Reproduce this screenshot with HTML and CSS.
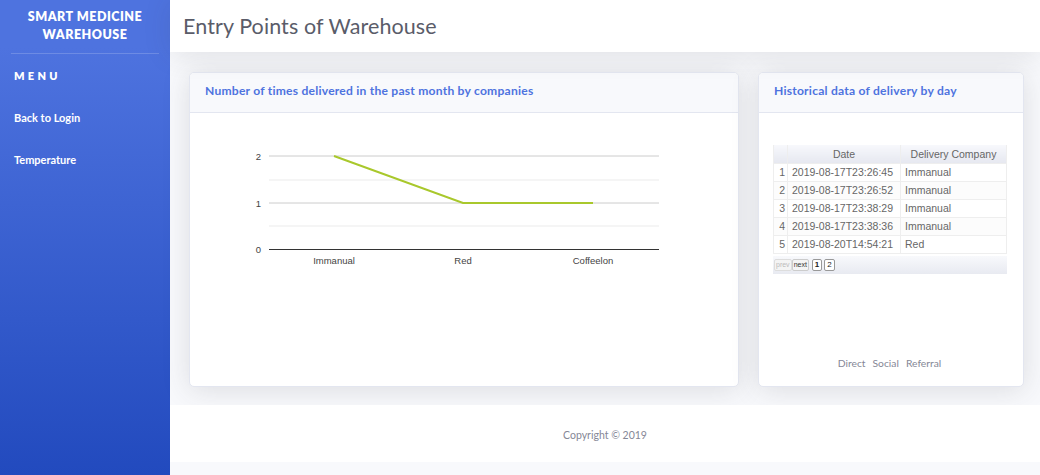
FILE: index.html
```html
<!DOCTYPE html>
<html>
<head>
<meta charset="utf-8">
<link rel="stylesheet" href="styles.css">
</head>
<body>
<div class="wrapper">
  <aside class="sidebar">
    <div class="brand">SMART MEDICINE<br>WAREHOUSE</div>
    <hr class="divider">
    <div class="menu-heading">MENU</div>
    <a class="nav-link" href="#">Back to Login</a>
    <a class="nav-link" href="#">Temperature</a>
  </aside>
  <div class="main">
    <header class="topbar">
      <h1 class="page-title">Entry Points of Warehouse</h1>
    </header>
    <div class="content">
      <div class="card card-chart">
        <div class="card-header">Number of times delivered in the past month by companies</div>
        <div class="card-body chart-body">
          <svg class="line-chart" width="549" height="274" viewBox="0 0 549 274">
            <line x1="80" y1="68" x2="470" y2="68" stroke="#ebebeb" stroke-width="1"/>
            <line x1="80" y1="114" x2="470" y2="114" stroke="#ebebeb" stroke-width="1"/>
            <line x1="80" y1="44" x2="470" y2="44" stroke="#cccccc" stroke-width="1"/>
            <line x1="80" y1="91" x2="470" y2="91" stroke="#cccccc" stroke-width="1"/>
            <line x1="80" y1="137.5" x2="470" y2="137.5" stroke="#333333" stroke-width="1"/>
            <g class="axis-text" font-family="Liberation Sans, Arial, sans-serif" font-size="9.5" fill="#444">
              <text x="72" y="47.5" text-anchor="end">2</text>
              <text x="72" y="94.5" text-anchor="end">1</text>
              <text x="72" y="141" text-anchor="end">0</text>
              <text x="145" y="152" text-anchor="middle">Immanual</text>
              <text x="274" y="152" text-anchor="middle">Red</text>
              <text x="404" y="152" text-anchor="middle">Coffeelon</text>
            </g>
            <polyline points="145,44 274,91 404,91" fill="none" stroke="#a9c82c" stroke-width="2"/>
          </svg>
        </div>
      </div>
      <div class="card card-table">
        <div class="card-header">Historical data of delivery by day</div>
        <div class="card-body table-body">
          <div class="gtable">
            <table>
              <thead>
                <tr><th class="num"></th><th class="date">Date</th><th class="company">Delivery Company</th></tr>
              </thead>
              <tbody>
                <tr><td class="num">1</td><td>2019-08-17T23:26:45</td><td>Immanual</td></tr>
                <tr class="even"><td class="num">2</td><td>2019-08-17T23:26:52</td><td>Immanual</td></tr>
                <tr><td class="num">3</td><td>2019-08-17T23:38:29</td><td>Immanual</td></tr>
                <tr class="even"><td class="num">4</td><td>2019-08-17T23:38:36</td><td>Immanual</td></tr>
                <tr><td class="num">5</td><td>2019-08-20T14:54:21</td><td>Red</td></tr>
              </tbody>
            </table>
            <div class="pager">
              <span class="pbtn disabled">prev</span><span class="pbtn">next</span>
              <span class="page active">1</span><span class="page">2</span>
            </div>
          </div>
          <div class="legend">
            <span>Direct</span><span>Social</span><span>Referral</span>
          </div>
        </div>
      </div>
    </div>
    <footer class="footer">Copyright © 2019</footer>
  </div>
</div>
</body>
</html>
```

FILE: styles.css
```css
* { box-sizing: border-box; }
html, body { margin: 0; padding: 0; }
body {
  font-family: "Lato", "Open Sans", sans-serif;
  background: #f8f9fc;
  width: 1040px;
  height: 475px;
  overflow: hidden;
}
.wrapper { display: flex; height: 475px; }
.sidebar {
  width: 170px;
  flex: none;
  background: linear-gradient(180deg, #4e73df 10%, #224abe 100%);
  color: #fff;
  display: flex;
  flex-direction: column;
}
.brand {
  text-align: center;
  font-weight: 800;
  font-size: 12.5px;
  letter-spacing: 0.04em;
  line-height: 18px;
  padding-top: 8px;
  height: 52px;
}
.divider {
  border: 0;
  border-top: 1px solid rgba(255,255,255,0.18);
  margin: 1px 11px 0 11px;
}
.menu-heading {
  font-weight: 800;
  font-size: 11px;
  letter-spacing: 0.3em;
  padding: 15px 0 0 14px;
  line-height: 14px;
}
.nav-link {
  color: #fff;
  text-decoration: none;
  font-weight: 700;
  font-size: 11px;
  padding-left: 14px;
  line-height: 14px;
}
.menu-heading + .nav-link { margin-top: 28px; }
.nav-link + .nav-link { margin-top: 28px; }
.main { flex: 1; display: flex; flex-direction: column; }
.topbar {
  height: 52px;
  background: #fff;
  box-shadow: 0 0.15rem 1.75rem 0 rgba(58,59,69,0.12);
  display: flex;
  align-items: center;
  padding-left: 13px;
  position: relative;
  z-index: 1;
}
.page-title {
  margin: 0;
  font-weight: 400;
  font-size: 21.5px;
  letter-spacing: 0.1px;
  color: #5a5c69;
  padding-bottom: 1px;
}
.content {
  display: grid;
  grid-template-columns: 550px 266px;
  column-gap: 19px;
  padding: 20px 16px 0 19px;
  height: 334px;
}
.card {
  background: #fff;
  border: 1px solid #e3e6f0;
  border-radius: 5px;
  box-shadow: 0 0.15rem 1.75rem 0 rgba(58,59,69,0.15);
  height: 315px;
  display: flex;
  flex-direction: column;
  overflow: hidden;
}
.card-header {
  height: 40px;
  flex: none;
  background: #f8f9fc;
  border-bottom: 1px solid #e3e6f0;
  color: #4e73df;
  font-weight: 700;
  font-size: 12.1px;
  letter-spacing: 0.22px;
  display: flex;
  align-items: center;
  padding-left: 15px;
  padding-bottom: 4px;
}
.card-body { flex: 1; position: relative; }
.line-chart { display: block; margin-left: -1px; margin-top: -1px; }
.table-body {
  display: flex;
  flex-direction: column;
  padding: 32px 15px 0 14px;
}
.gtable {
  font-family: "Liberation Sans", Arial, sans-serif;
  font-size: 10.5px;
  color: #666;
  width: 234px;
}
.gtable table {
  border-collapse: collapse;
  width: 234px;
}
.gtable th {
  height: 18px;
  font-weight: 400;
  color: #666;
  background: linear-gradient(to bottom, #f7f8fc 0%, #e6e8f0 100%);
  border: 1px solid #eee;
  border-top: 0;
  padding: 0 4px;
  text-align: center;
}
.gtable th.num { width: 14px; }
.gtable th.date { width: 113px; }
.gtable td {
  height: 18px;
  border: 1px solid #eee;
  padding: 0 4px;
  white-space: nowrap;
  line-height: 16px;
}
.gtable td.num { text-align: right; padding: 0 2px 0 2px; }
.gtable tr.even td { background: #fcfcfc; }
.pager {
  margin-top: 2px;
  height: 18px;
  background: linear-gradient(to bottom, #f8f9fc 0%, #e8eaf1 100%);
  display: flex;
  align-items: center;
  padding-left: 1px;
  font-size: 7px;
}
.pbtn {
  border: 1px solid #ccc;
  background: #f4f4f4;
  color: #333;
  padding: 1px 1px;
  line-height: 8px;
  border-radius: 2px;
}
.pbtn.disabled { color: #bbb; border-color: #ddd; }
.page {
  margin-left: 2px;
  border: 1px solid #999;
  background: #fff;
  color: #222;
  font-size: 8px;
  line-height: 10px;
  padding: 0 2px;
  border-radius: 2px;
}
.page.active { font-weight: 700; margin-left: 3px; }
.legend {
  margin-top: auto;
  margin-bottom: 17px;
  text-align: center;
  font-size: 10.3px;
  color: #858796;
  display: flex;
  justify-content: center;
  gap: 7px;
  padding-right: 2px;
}
.footer {
  margin-top: 19px;
  height: 57px;
  background: #fff;
  display: flex;
  align-items: center;
  justify-content: center;
  font-size: 10.5px;
  color: #858796;
  padding-top: 2px;
}
```
